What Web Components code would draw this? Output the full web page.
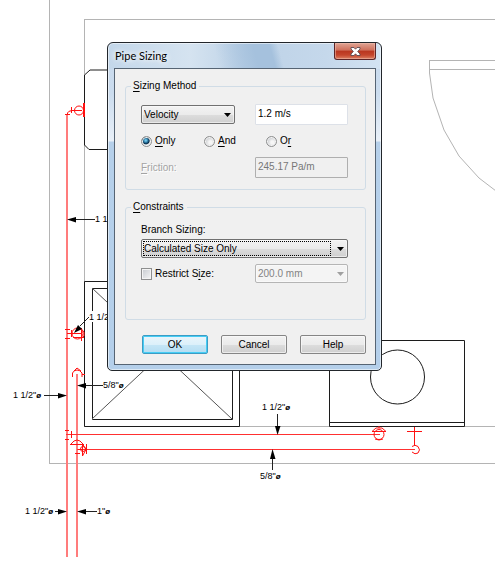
<!DOCTYPE html>
<html lang="en">
<head>
<meta charset="utf-8">
<title>Pipe Sizing</title>
<style>
    body {
        margin: 0;
        background: #fff;
        color: #000;
        font: 10px/12px "Liberation Sans", Arial, sans-serif;
        overflow: hidden;
    }

    .workspace {
        position: relative;
        min-height: 100vh;
    }

    /* The dialog floats over the drawing */
    aero-dialog {
        position: absolute;
        left: 107px;
        top: 42px;
        width: 275px;
    }

    .pair {
        display: grid;
        grid-template-columns: 114px 1fr;
        align-items: center;
    }

    .pair drop-down.short {
        width: 94px;
    }
</style>
</head>
<body>
<main class="workspace">
    <pipe-plan></pipe-plan>

    <aero-dialog heading="Pipe Sizing">
        <group-box heading="Sizing Method" hotkey="S">
            <div class="pair">
                <drop-down class="short" name="Sizing method" value="Velocity"></drop-down>
                <text-field name="Velocity" value="1.2 m/s"></text-field>
            </div>
            <radio-row name="mode" options="Only:O,And:A,Or:r"></radio-row>
            <text-field label="Friction:" hotkey="F" value="245.17 Pa/m" disabled></text-field>
        </group-box>

        <group-box class="tall" heading="Constraints" hotkey="C">
            <drop-down label="Branch Sizing:" value="Calculated Size Only" focused></drop-down>
            <div class="pair">
                <check-option label="Restrict Size:" hotkey="i" nth="2"></check-option>
                <drop-down name="Size limit" value="200.0 mm" disabled></drop-down>
            </div>
        </group-box>

        <push-button slot="actions" primary>OK</push-button>
        <push-button slot="actions">Cancel</push-button>
        <push-button slot="actions">Help</push-button>
    </aero-dialog>
</main>

<script>
// Underline the access key inside a caption
function withHotkey(text, key, nth = 1) {
    if (!key) return text;
    let at = -1;
    for (let i = 0; i < nth; i++) at = text.indexOf(key, at + 1);
    return `${text.slice(0, at)}<u>${key}</u>${text.slice(at + 1)}`;
}

const baseStyle = `
    * { box-sizing: border-box; }
    u { text-underline-offset: 2px; text-decoration-skip-ink: none; }
    label { cursor: default; white-space: nowrap; }
`;

class AeroDialog extends HTMLElement {
    constructor() {
        super();
        this.attachShadow({ mode: 'open' });
        this.shadowRoot.innerHTML = `
            <style>
                ${baseStyle}
                :host { display: block; box-sizing: border-box; }
                section {
                    border: 1px solid #22262b;
                    border-radius: 6px 6px 5px 5px;
                    padding: 0 5px 5px 6px;
                    background:
                        linear-gradient(75deg, #a5c1dd00 40%, #a5c1dd 54%, #a5c1dd 60%, #a5c1dd00 63%) top / 100% 26px no-repeat,
                        linear-gradient(90deg, #c3d7ea, #d5e3f0 30%, #bdd2e7 50%, #c5d8eb 80%, #d3e3f2) top / 100% 26px no-repeat,
                        linear-gradient(#c9daec, #cbdcee 50px, #e9f0f8 98px, #b6d0ea 99px, #b4cfea);
                    box-shadow: inset 0 0 0 1px #ffffff88;
                }
                header {
                    display: flex;
                    justify-content: space-between;
                    align-items: flex-start;
                    height: 25px;
                    padding-left: 1px;
                }
                h1 {
                    margin: 6px 0 0;
                    font: 11px/14px "Lato", "Liberation Sans", sans-serif;
                    text-shadow: 0 0 6px #fff, 0 0 6px #fff;
                }
                .close {
                    display: grid;
                    place-items: center;
                    width: 42px;
                    height: 17px;
                    padding: 0;
                    border: 1px solid #5b2528;
                    border-top: 0;
                    border-radius: 0 0 3px 3px;
                    background: linear-gradient(#e0a595, #cf6f5a 45%, #b93620 50%, #c4452c 75%, #dc8064);
                    box-shadow: inset 0 0 0 1px #f0bfb088;
                }
                .client {
                    border: 1px solid #566473;
                    background: #f0f0f0;
                    padding: 11px 9px 10px 10px;
                    display: grid;
                    gap: 11px;
                }
                footer {
                    display: flex;
                    justify-content: flex-end;
                    gap: 13px;
                    padding-top: 4px;
                }
            </style>
            <section role="dialog" aria-label="${this.getAttribute('heading')}">
                <header>
                    <h1>${this.getAttribute('heading')}</h1>
                    <button class="close" aria-label="Close">
                        <svg width="11" height="9" viewBox="0 0 11 9">
                            <path d="M1 .5h3l1.500 1.700 1.500-1.700h3v1.500L7.700 4.500 10 7v1.500H7L5.500 6.800 4 8.500H1V7l2.300-2.500L1 2z" fill="#fff" stroke="#5a4a50" stroke-width=".9"/>
                        </svg>
                    </button>
                </header>
                <div class="client">
                    <slot></slot>
                    <footer><slot name="actions"></slot></footer>
                </div>
            </section>
        `;
    }
}

class GroupBox extends HTMLElement {
    constructor() {
        super();
        this.attachShadow({ mode: 'open' });
        this.shadowRoot.innerHTML = `
            <style>
                ${baseStyle}
                :host { display: block; }
                fieldset {
                    margin: 0;
                    padding: 12px 17px 11px 15px;
                    border: 1px solid #d0dce6;
                    border-radius: 3px;
                    min-width: 0;
                }
                legend {
                    margin-left: -10px;
                    padding: 0 3px 0 2px;
                    line-height: 12px;
                }
                .rows { display: grid; gap: 9px; }
                :host(.tall) fieldset { padding-top: 11px; padding-bottom: 36px; }
                :host(.tall) .rows { gap: 6px; }
            </style>
            <fieldset>
                <legend>${withHotkey(this.getAttribute('heading'), this.getAttribute('hotkey'))}</legend>
                <div class="rows"><slot></slot></div>
            </fieldset>
        `;
    }
}

class DropDown extends HTMLElement {
    constructor() {
        super();
        this.attachShadow({ mode: 'open' });
        const label = this.getAttribute('label');
        const value = this.getAttribute('value');
        this.shadowRoot.innerHTML = `
            <style>
                ${baseStyle}
                :host { display: grid; gap: 3px; }
                .box { display: grid; align-items: center; }
                .box > * { grid-area: 1 / 1; }
                select {
                    appearance: none;
                    width: 100%;
                    height: 19px;
                    margin: 0;
                    padding: 0 18px 0 2px;
                    border: 1px solid #707070;
                    border-radius: 2px;
                    outline: none;
                    background: linear-gradient(#f2f2f2, #ebebeb 50%, #dddddd 51%, #cfcfcf);
                    box-shadow: inset 0 0 0 1px #fbfbfb99;
                    color: #000;
                    font: inherit;
                    opacity: 1;
                }
                select:disabled {
                    border-color: #b5b5b5;
                    background: #f4f4f4;
                    color: #838383;
                }
                .focus {
                    height: 15px;
                    margin: 0 17px 0 2px;
                    border: 1px dotted #000;
                    pointer-events: none;
                }
                .arrow {
                    justify-self: end;
                    margin-right: 4px;
                    pointer-events: none;
                }
                select:disabled ~ .arrow { fill: #a0a0a0; }
            </style>
            ${label ? `<label for="choice">${label}</label>` : ''}
            <div class="box">
                <select id="choice" ${label ? '' : `aria-label="${this.getAttribute('name')}"`}
                    ${this.hasAttribute('disabled') ? 'disabled' : ''}>
                    <option>${value}</option>
                </select>
                ${this.hasAttribute('focused') ? '<span class="focus"></span>' : ''}
                <svg class="arrow" width="7" height="4"><path d="M0 0h7L3.500 4z"/></svg>
            </div>
        `;
    }
}

class TextField extends HTMLElement {
    constructor() {
        super();
        this.attachShadow({ mode: 'open' });
        const label = this.getAttribute('label');
        this.shadowRoot.innerHTML = `
            <style>
                ${baseStyle}
                :host { display: grid; align-items: center; }
                :host([label]) { grid-template-columns: 114px 1fr; }
                :host([disabled]) label { color: #a3a3a3; text-shadow: 1px 1px #fff; }
                input {
                    width: 100%;
                    min-width: 0;
                    height: 21px;
                    margin: 0;
                    padding: 0 2px 3px 2px;
                    border: 1px solid #dde1e8;
                    border-radius: 1px;
                    background: #fff;
                    color: #000;
                    font: inherit;
                }
                input:disabled {
                    border-color: #afafaf;
                    background: #f0f0f0;
                    color: #777;
                }
            </style>
            ${label ? `<label for="entry">${withHotkey(label, this.getAttribute('hotkey'))}</label>` : ''}
            <input id="entry" type="text" value="${this.getAttribute('value')}"
                ${label ? '' : `aria-label="${this.getAttribute('name')}"`}
                ${this.hasAttribute('disabled') ? 'disabled' : ''}>
        `;
    }
}

class RadioRow extends HTMLElement {
    constructor() {
        super();
        this.attachShadow({ mode: 'open' });
        const name = this.getAttribute('name');
        const options = this.getAttribute('options').split(',').map(o => o.split(':'));
        this.shadowRoot.innerHTML = `
            <style>
                ${baseStyle}
                :host { display: grid; grid-template-columns: 63px 62px 1fr; height: 14px; }
                label { display: flex; align-items: center; gap: 3px; }
                input {
                    appearance: none;
                    width: 11px;
                    height: 11px;
                    margin: 0;
                    border: 1px solid #8e8f8f;
                    border-radius: 50%;
                    background: radial-gradient(circle at 60% 60%, #f6f6f6 20%, #c3c6ca 75%);
                    box-shadow: inset 0 0 0 1px #f4f4f4;
                }
                input:checked {
                    background: radial-gradient(circle at 42% 38%, #6fc8ec 0 8%, #16577f 35%, #0b2c46 45%, #dfe5e9 58%);
                }
            </style>
            ${options.map(([text, key], i) => `
                <label><input type="radio" name="${name}" ${i === 0 ? 'checked' : ''}><span>${withHotkey(text, key)}</span></label>
            `).join('')}
        `;
    }
}

class CheckOption extends HTMLElement {
    constructor() {
        super();
        this.attachShadow({ mode: 'open' });
        const nth = parseInt(this.getAttribute('nth')) || 1;
        this.shadowRoot.innerHTML = `
            <style>
                ${baseStyle}
                :host { display: block; }
                label { display: flex; align-items: center; gap: 3px; }
                input {
                    appearance: none;
                    width: 11px;
                    height: 12px;
                    margin: 0;
                    border: 1px solid #8e8f8f;
                    background: linear-gradient(135deg, #c6cacf, #f6f6f6);
                    box-shadow: inset 0 0 0 1px #f4f4f4;
                }
            </style>
            <label><input type="checkbox"><span>${withHotkey(this.getAttribute('label'), this.getAttribute('hotkey'), nth)}</span></label>
        `;
    }
}

class PushButton extends HTMLElement {
    constructor() {
        super();
        this.attachShadow({ mode: 'open' });
        this.shadowRoot.innerHTML = `
            <style>
                ${baseStyle}
                :host { display: block; }
                button {
                    width: 66px;
                    height: 19px;
                    padding: 0;
                    border: 1px solid #858585;
                    border-radius: 2px;
                    background: linear-gradient(#f2f2f2, #ebebeb 50%, #dddddd 51%, #cfcfcf);
                    box-shadow: inset 0 0 0 1px #fbfbfbaa;
                    color: #000;
                    font: inherit;
                }
                :host([primary]) button {
                    border-color: #3c9cc4;
                    background: linear-gradient(#eaf5fb, #dcf0fa 50%, #c5e6f6 51%, #b4ddf2);
                    box-shadow: inset 0 0 0 1px #45cdf5;
                }
            </style>
            <button type="button"><slot></slot></button>
        `;
    }
}

// Plumbing plan: walls and fixtures in black and grey, pipework in red
class PipePlan extends HTMLElement {
    constructor() {
        super();
        this.attachShadow({ mode: 'open' });
        this.shadowRoot.innerHTML = `
            <style>
                :host { display: block; }
                svg { display: block; width: 100%; height: 100vh; min-height: 560px; }
                g { fill: none; }
                .wall { stroke: #b4b4b4; }
                .fixture { stroke: #1c1c1c; }
                .pipe { stroke: #ff3030; }
                .riser { stroke: #ff7c7c; stroke-width: 2; }
                .fitting { stroke: #ff1010; }
                .leader { stroke: #222; }
                .head path { fill: #000; }
                text { font: 9px "Liberation Sans", Arial, sans-serif; fill: #000; }
                .dia { font-style: italic; font-size: 8px; font-weight: bold; }
            </style>
            <svg role="img" aria-label="Plumbing plan">
                <g class="wall">
                    <path d="M49.500 0V463"/>
                    <line x1="49" y1="463.500" x2="100%" y2="463.500"/>
                    <path d="M84.500 20V427"/>
                    <line x1="84" y1="19.500" x2="100%" y2="19.500"/>
                    <line x1="84" y1="426.500" x2="100%" y2="426.500"/>
                    <line x1="429" y1="60.500" x2="100%" y2="60.500"/>
                    <line x1="429" y1="69.500" x2="100%" y2="69.500"/>
                    <path d="M429.500 60V73L433 98L444 130L459 156L479 178L496 191"/>
                </g>
                <g class="fixture">
                    <path d="M120 70H90L84.500 75V145L89 149.500H120"/>
                    <path d="M84.500 281.500H239.500V426.500H84.500zM92.500 288.500H232.500V419.500H92.500z"/>
                    <path d="M92 288L232 419M232 288L92 419" stroke="#555"/>
                    <path d="M329.500 340.500H464.500V426.500H329.500zM329.500 422.500H464.500" fill="#fff"/>
                    <circle cx="397.500" cy="377" r="27"/>
                </g>
                <g class="riser">
                    <path d="M67 114V557M77 374V557"/>
                </g>
                <g class="pipe">
                    <path d="M66 434.500H380M77 449.500H415"/>
                </g>
                <g class="fitting">
                    <path d="M65 114.500H70M67.500 114V113Q68 111 72 110.500H82M71.500 107V113"/>
                    <circle cx="79" cy="110.500" r="4.500"/>
                    <path d="M84 103V117" stroke-width="2"/>
                    <path d="M65 329.500H70M65 338.500H70M67 333.500H82M71.500 330V337"/>
                    <circle cx="77.500" cy="333.500" r="5.500"/>
                    <path d="M76 328.500H81L84 332V336L81 339M81.500 328V341M73 337.500H84"/>
                    <path d="M72.500 377V373Q74 370 77 370Q80 370 82 373V377M74 371L77 368L81 371M82 374.500H85"/>
                    <path d="M65 430.500H69M65 439.500H69M71.500 431V438"/>
                    <path d="M71 444Q74 440 77 440Q80 440 83 444M70 444.500H84M75 453.500H80"/>
                    <path d="M82.500 444V456L86 449.500L82.500 444M78 449.500H83M86.500 444V454"/>
                    <circle cx="83" cy="449" r="2.500"/>
                    <circle cx="379" cy="434.500" r="5"/>
                    <path d="M372 431.500L376 428H382L386 431.500zM379 426V428M375 439L379 440L383 439"/>
                    <path d="M414.500 427V445M407 431.500H422M412 446.500Q415 444 418 446.500Q421 450 418 453Q415 455 412 452"/>
                </g>
                <rect x="89" y="311" width="20" height="11" fill="#fff"/>
                <g class="leader">
                    <path d="M76 219.500H95M80 326L89 317M85 385.500H103M44 395.500H59M55 511.500H59M85 511.500H97M277.500 414V427M272.500 458V470"/>
                </g>
                <g class="head">
                    <path d="M67 219.500L76 217V222.500z"/>
                    <path d="M74 333L78 325L82 329z"/>
                    <path d="M77 385.500L86 383V388.500z"/>
                    <path d="M67 395.500L58 393V398.500z"/>
                    <path d="M67 511.500L58 509V514.500z"/>
                    <path d="M77 511.500L86 509V514.500z"/>
                    <path d="M277.500 435L275 426H280.500z"/>
                    <path d="M272.500 449L270 459H275.500z"/>
                </g>
                <text x="95" y="222">1 1</text>
                <text x="89" y="320">1 1/2</text>
                <text x="103" y="388">5/8"<tspan class="dia">ø</tspan></text>
                <text x="13" y="398">1 1/2"<tspan class="dia">ø</tspan></text>
                <text x="25" y="514">1 1/2"<tspan class="dia">ø</tspan></text>
                <text x="97" y="514">1"<tspan class="dia">ø</tspan></text>
                <text x="262" y="410">1 1/2"<tspan class="dia">ø</tspan></text>
                <text x="260" y="479">5/8"<tspan class="dia">ø</tspan></text>
            </svg>
        `;
    }
}

customElements.define('aero-dialog', AeroDialog);
customElements.define('group-box', GroupBox);
customElements.define('drop-down', DropDown);
customElements.define('text-field', TextField);
customElements.define('radio-row', RadioRow);
customElements.define('check-option', CheckOption);
customElements.define('push-button', PushButton);
customElements.define('pipe-plan', PipePlan);
</script>
</body>
</html>
